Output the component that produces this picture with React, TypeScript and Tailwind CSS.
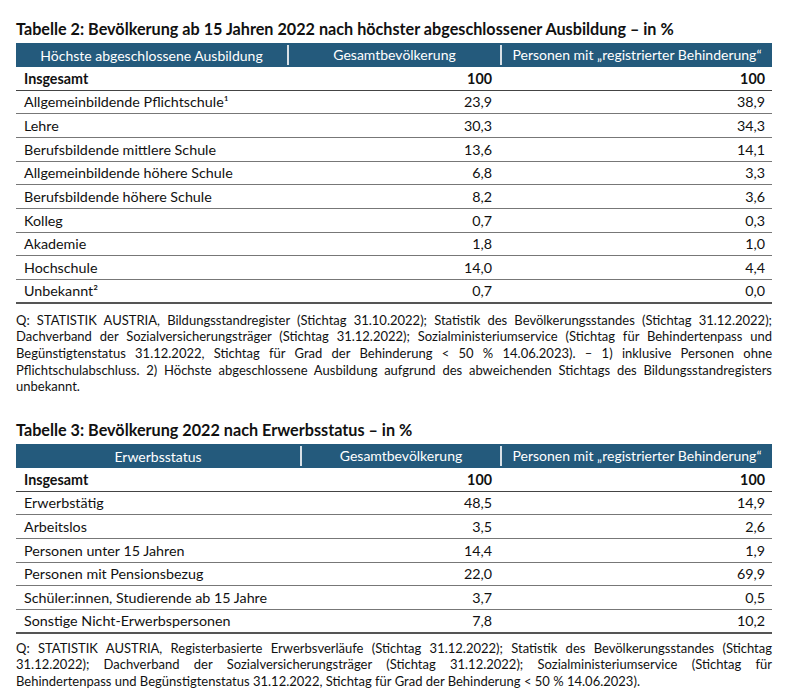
import React from "react";

type Row = { label: React.ReactNode; a: string; b: string; bold?: boolean };

const t2: Row[] = [
  { label: "Insgesamt", a: "100", b: "100", bold: true },
  { label: "Allgemeinbildende Pflichtschule¹", a: "23,9", b: "38,9" },
  { label: "Lehre", a: "30,3", b: "34,3" },
  { label: "Berufsbildende mittlere Schule", a: "13,6", b: "14,1" },
  { label: "Allgemeinbildende höhere Schule", a: "6,8", b: "3,3" },
  { label: "Berufsbildende höhere Schule", a: "8,2", b: "3,6" },
  { label: "Kolleg", a: "0,7", b: "0,3" },
  { label: "Akademie", a: "1,8", b: "1,0" },
  { label: "Hochschule", a: "14,0", b: "4,4" },
  { label: "Unbekannt²", a: "0,7", b: "0,0" },
];

const t3: Row[] = [
  { label: "Insgesamt", a: "100", b: "100", bold: true },
  { label: "Erwerbstätig", a: "48,5", b: "14,9" },
  { label: "Arbeitslos", a: "3,5", b: "2,6" },
  { label: "Personen unter 15 Jahren", a: "14,4", b: "1,9" },
  { label: "Personen mit Pensionsbezug", a: "22,0", b: "69,9" },
  { label: "Schüler:innen, Studierende ab 15 Jahre", a: "3,7", b: "0,5" },
  { label: "Sonstige Nicht-Erwerbspersonen", a: "7,8", b: "10,2" },
];

function Table({ cols, head, rows }: { cols: string; head: string; rows: Row[] }) {
  return (
    <div className="w-[756px]">
      <div className={`grid ${cols} h-[24px] bg-[#245a7c] text-white text-[14px] items-center`}>
        <div className="text-center">{head}</div>
        <div className="text-center border-l-2 border-[#d8e0e6] h-[20px] leading-[20px]">Gesamtbevölkerung</div>
        <div className="text-center border-l-2 border-[#d8e0e6] h-[20px] leading-[20px]">Personen mit „registrierter Behinderung“</div>
      </div>
      {rows.map((r, i) => (
        <div
          key={i}
          className={`grid ${cols} h-[23.67px] items-center text-[14.3px] text-[#111] ${
            i === rows.length - 1 ? "border-b-2 border-[#555]" : i === 0 ? "border-b border-[#444]" : "border-b border-[#777]"
          } ${r.bold ? "font-bold" : ""}`}
        >
          <div className="pl-2">{r.label}</div>
          <div className="text-right pr-2">{r.a}</div>
          <div className="text-right pr-[7px]">{r.b}</div>
        </div>
      ))}
    </div>
  );
}

export default function App() {
  return (
    <div className="w-[788px] h-[700px] bg-white font-['Lato',sans-serif] text-[#111] pl-4 pt-[19px]">
      <h2 className="text-[16.2px] font-bold leading-[20px] h-[24px]">
        Tabelle 2: Bevölkerung ab 15 Jahren 2022 nach höchster abgeschlossener Ausbildung – in %
      </h2>
      <Table cols="grid-cols-[271px_213px_1fr]" head="Höchste abgeschlossene Ausbildung" rows={t2} />
      <p className="w-[756px] text-[13px] leading-[16.7px] text-justify mt-[8px]">
        Q: STATISTIK AUSTRIA, Bildungsstandregister (Stichtag 31.10.2022); Statistik des Bevölkerungsstandes (Stichtag 31.12.2022);
        Dachverband der Sozialversicherungsträger (Stichtag 31.12.2022); Sozialministeriumservice (Stichtag für Behindertenpass und
        Begünstigtenstatus 31.12.2022, Stichtag für Grad der Behinderung &lt; 50 % 14.06.2023). – 1) inklusive Personen ohne
        Pflichtschulabschluss. 2) Höchste abgeschlossene Ausbildung aufgrund des abweichenden Stichtags des Bildungsstandregisters
        unbekannt.
      </p>
      <h2 className="text-[16.2px] font-bold leading-[20px] h-[24px] mt-[25px]">
        Tabelle 3: Bevölkerung 2022 nach Erwerbsstatus – in %
      </h2>
      <Table cols="grid-cols-[284px_200px_1fr]" head="Erwerbsstatus" rows={t3} />
      <p className="w-[756px] text-[13px] leading-[16.7px] text-justify mt-[6px]">
        Q: STATISTIK AUSTRIA, Registerbasierte Erwerbsverläufe (Stichtag 31.12.2022); Statistik des Bevölkerungsstandes (Stichtag
        31.12.2022); Dachverband der Sozialversicherungsträger (Stichtag 31.12.2022); Sozialministeriumservice (Stichtag für
        Behindertenpass und Begünstigtenstatus 31.12.2022, Stichtag für Grad der Behinderung &lt; 50 % 14.06.2023).
      </p>
    </div>
  );
}
